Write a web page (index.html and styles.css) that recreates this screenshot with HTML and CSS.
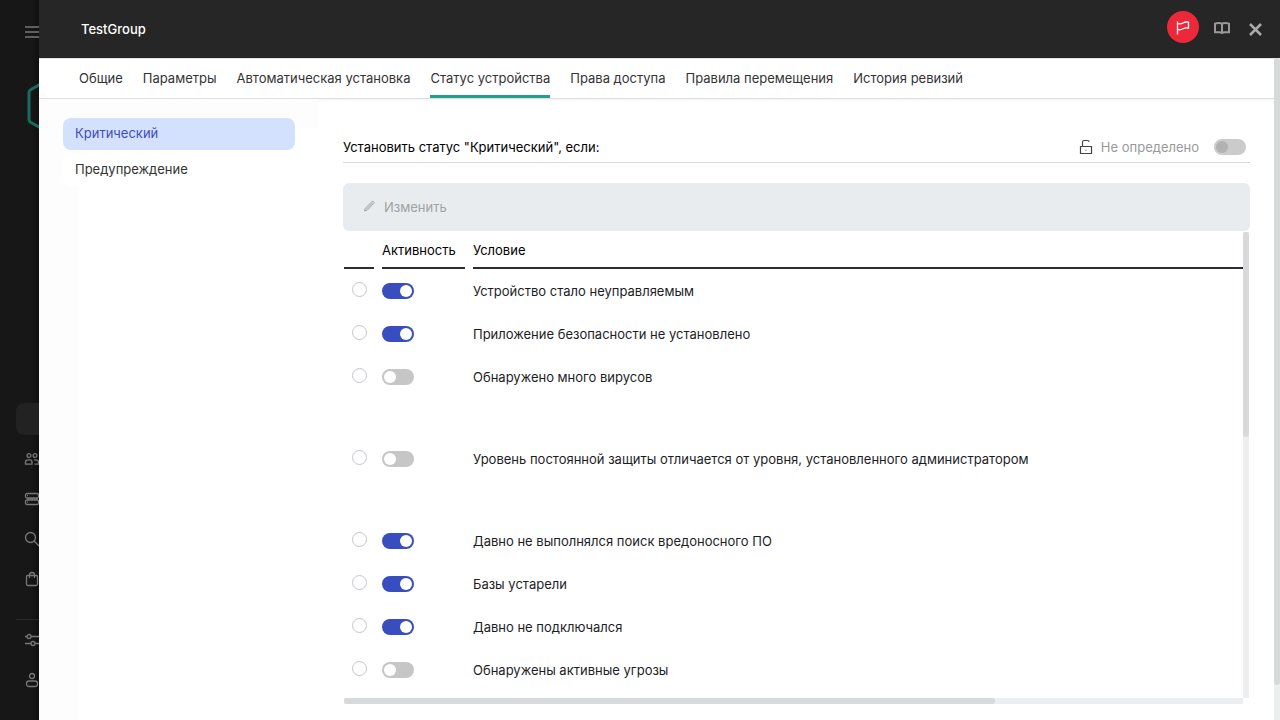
FILE: index.html
```html
<!DOCTYPE html>
<html lang="ru">
<head>
<meta charset="utf-8">
<title>TestGroup</title>
<link rel="stylesheet" href="styles.css">
</head>
<body>
<div class="app">
  <nav class="rail" aria-label="Главное меню">
    <button class="rail-menu" aria-label="Меню"><svg width="16" height="16" viewBox="0 0 16 16"><path d="M0 3h16M0 8h16M0 13h16"/></svg></button>
    <svg class="rail-logo" width="40" height="48" viewBox="0 0 40 48"><path d="M20 -1 5 7.500Q3 8.500 3 11v26q0 2.500 2 3.500l15 8.500 15-8.500q2-1 2-3.500V11q0-2.500-2-3.500z"/></svg>
    <div class="rail-list">
      <a class="rail-item active" href="#" aria-label="Активы"></a>
      <a class="rail-item" href="#" aria-label="Пользователи"><svg width="16" height="16" viewBox="0 0 16 16"><circle cx="5" cy="4.500" r="1.900"/><circle cx="11" cy="4.500" r="1.900"/><path d="M4 8.800h2Q8 8.800 8 11v2.200H1.500V11q0-2.200 2.500-2.200zM10 8.800h2q2.500 0 2.500 2.200v2.200h-4"/></svg></a>
      <a class="rail-item" href="#" aria-label="Операции"><svg width="16" height="16" viewBox="0 0 16 16"><rect x="1.500" y="2.500" width="13" height="4.500" rx="1.500"/><rect x="1.500" y="9" width="13" height="4.500" rx="1.500"/><path d="M3 4.700h1M3 11.200h1M3 8h11"/></svg></a>
      <a class="rail-item" href="#" aria-label="Поиск"><svg width="16" height="16" viewBox="0 0 16 16"><circle cx="6.500" cy="6.500" r="5"/><path d="m10 10 5 5"/></svg></a>
      <a class="rail-item" href="#" aria-label="Магазин"><svg width="16" height="16" viewBox="0 0 16 16"><path d="M3.500 4.500h9q1 0 1 1v7.500q0 1.500-1.500 1.500H4q-1.500 0-1.500-1.500v-7.500q0-1 1-1zM5.500 7V4q0-2.500 2.500-2.500T10.500 4v3"/></svg></a>
    </div>
    <div class="rail-list rail-foot">
      <a class="rail-item" href="#" aria-label="Параметры"><svg width="16" height="16" viewBox="0 0 16 16"><path d="M1 4.500h2M7 4.500h9M1 11.500h6M11 11.500h5"/><circle cx="5" cy="4.500" r="2"/><circle cx="9" cy="11.500" r="2"/></svg></a>
      <a class="rail-item" href="#" aria-label="Учетная запись"><svg width="16" height="16" viewBox="0 0 16 16"><circle cx="8" cy="4" r="2.500"/><rect x="2.500" y="9" width="11" height="5.500" rx="2.500"/></svg></a>
    </div>
  </nav>

  <main class="panel">
    <header class="panel-head">
      <h1>TestGroup</h1>
      <div class="head-actions">
        <button class="flag" aria-label="Сообщения"><svg width="16" height="16" viewBox="0 0 16 16"><path d="M2.500 2.500v13M2.500 4.500c2 .6 4 .4 5.500-.5 1.700-1 3.500-1.200 5.500-.8V9c-2-.4-3.800-.2-5.500.8-1.500.9-3.500 1.200-5.500.6"/></svg></button>
        <button class="book" aria-label="Справка"><svg width="16" height="14" viewBox="0 0 16 14"><path d="M8 3Q7 2 5 2 2.500 2 1 2.600v8.700h4.500Q7.200 11.300 8 12q.8-.7 2.500-.7H15V2.600Q13.500 2 11 2 9 2 8 3zv9"/></svg></button>
        <button class="close" aria-label="Закрыть"><svg width="13" height="13" viewBox="0 0 13 13"><path d="m1 1 11 11M12 1 1 12"/></svg></button>
      </div>
    </header>

    <div class="panel-scroll">
      <div class="panel-body">
        <nav class="tabs">
          <a href="#">Общие</a>
          <a href="#">Параметры</a>
          <a href="#">Автоматическая установка</a>
          <a href="#" class="current" aria-current="page">Статус устройства</a>
          <a href="#">Права доступа</a>
          <a href="#">Правила перемещения</a>
          <a href="#">История ревизий</a>
        </nav>

        <div class="columns">
          <nav class="side">
            <a href="#" class="current" aria-current="page">Критический</a>
            <a href="#">Предупреждение</a>
          </nav>

          <section class="content">
            <div class="section-head">
              <h2>Установить статус "Критический", если:</h2>
              <div class="lock">
                <svg width="14" height="16" viewBox="0 0 14 16"><path d="M1.500 7.500h11v7h-11zM3.500 7.500V3q0-1.500 1.500-1.500h3.500Q10 1.500 10 3"/><path class="dot" d="M6 10.500h2v1.500H6z"/></svg>
                <label for="enforce">Не определено</label>
                <input class="toggle" id="enforce" type="checkbox" disabled>
              </div>
            </div>

            <div class="toolbar">
              <button disabled><svg width="13" height="14" viewBox="0 0 13 14"><path d="m1.500 11 .8-2.800L9 1.600q.8-.7 1.700.1t.1 1.700L4.200 10.200zM3.200 9.300l6.500-6.500"/></svg>Изменить</button>
            </div>

            <div class="table-area">
              <div class="table-view">
                <table>
                  <thead>
                    <tr><th class="pick"><span></span></th><th class="state"><span>Активность</span></th><th><span>Условие</span></th></tr>
                  </thead>
                  <tbody>
                    <tr><td><input type="radio" name="row" aria-labelledby="c1"></td><td><input class="toggle" type="checkbox" aria-labelledby="c1" checked></td><td id="c1">Устройство стало неуправляемым</td></tr>
                    <tr><td><input type="radio" name="row" aria-labelledby="c2"></td><td><input class="toggle" type="checkbox" aria-labelledby="c2" checked></td><td id="c2">Приложение безопасности не установлено</td></tr>
                    <tr class="tall"><td><input type="radio" name="row" aria-labelledby="c3"></td><td><input class="toggle" type="checkbox" aria-labelledby="c3"></td><td id="c3">Обнаружено много вирусов</td></tr>
                    <tr class="tall"><td><input type="radio" name="row" aria-labelledby="c4"></td><td><input class="toggle" type="checkbox" aria-labelledby="c4"></td><td id="c4">Уровень постоянной защиты отличается от уровня, установленного администратором</td></tr>
                    <tr><td><input type="radio" name="row" aria-labelledby="c5"></td><td><input class="toggle" type="checkbox" aria-labelledby="c5" checked></td><td id="c5">Давно не выполнялся поиск вредоносного ПО</td></tr>
                    <tr><td><input type="radio" name="row" aria-labelledby="c6"></td><td><input class="toggle" type="checkbox" aria-labelledby="c6" checked></td><td id="c6">Базы устарели</td></tr>
                    <tr><td><input type="radio" name="row" aria-labelledby="c7"></td><td><input class="toggle" type="checkbox" aria-labelledby="c7" checked></td><td id="c7">Давно не подключался</td></tr>
                    <tr><td><input type="radio" name="row" aria-labelledby="c8"></td><td><input class="toggle" type="checkbox" aria-labelledby="c8"></td><td id="c8">Обнаружены активные угрозы</td></tr>
                  </tbody>
                </table>
              </div>
              <div class="bar bar-y table-bar-y"><div class="thumb"></div></div>
              <div class="bar bar-x"><div class="thumb"></div></div>
            </div>
          </section>
        </div>
      </div>
      <div class="bar bar-y page-bar"><div class="thumb"></div></div>
    </div>
  </main>
</div>
</body>
</html>
```
FILE: styles.css
```css
* { box-sizing: border-box; }

body {
  margin: 0;
  font-family: Inter, "Liberation Sans", sans-serif;
  font-size: 13px;
  line-height: 20px;
  color: #1d1d1f;
  background: #171717;
}

a { color: inherit; text-decoration: none; }
h1, h2 { margin: 0; font-size: 13px; font-weight: 400; }
button { padding: 0; border: 0; background: none; font: inherit; color: inherit; }
svg { display: block; flex: none; fill: none; stroke: currentColor; }

.app {
  display: grid;
  grid-template-columns: 39px minmax(0, 1fr);
  height: 100vh;
  overflow: hidden;
}

/* Left rail */
.rail {
  display: flex;
  flex-direction: column;
  padding-bottom: 24px;
  overflow: hidden;
  color: #777;
  background: linear-gradient(90deg, #171717 80%, #101010);
}
.rail-menu { display: flex; align-items: center; height: 64px; padding-left: 25px; stroke-width: 2; color: #5e5e5e; }
.rail-logo { margin: 18px 0 0 26px; color: #176b5f; stroke-width: 3; }
.rail-list { display: flex; flex-direction: column; gap: 8px; margin: auto 0 24px 16px; }
.rail-foot { margin: 0 0 0 16px; padding-top: 4px; border-top: 1px solid #292929; }
.rail-item { display: flex; align-items: center; width: 40px; height: 32px; padding-left: 8px; border-radius: 8px; stroke-width: 1.3; }
.rail-item.active { background: #222; }

/* Panel */
.panel { display: flex; flex-direction: column; min-height: 0; background: #fff; }
.panel-head {
  display: flex;
  align-items: center;
  justify-content: space-between;
  flex: none;
  height: 58px;
  padding: 0 18px 0 42px;
  color: #fff;
  background: #262626;
}
.panel-head h1 { font-weight: 500; }
.head-actions { display: flex; align-items: center; color: #999; }
.flag {
  display: grid;
  place-items: center;
  width: 32px;
  height: 32px;
  margin: 0 15px 4px 0;
  border-radius: 50%;
  color: #fff;
  background: #ed2939;
  stroke-width: 1.3;
}
.book { margin: 0 19px 2px 0; stroke-width: 2; }
.close { stroke-width: 2.5; color: #aaa; }

.panel-scroll { display: flex; flex: 1; min-height: 0; }
.panel-body { display: flex; flex-direction: column; flex: 1; min-width: 0; }

.tabs {
  display: flex;
  flex: none;
  gap: 20px;
  height: 41px;
  padding-left: 40px;
  border-top: 1px solid #e3e3e3;
  border-bottom: 1px solid #dedede;
  box-shadow: 0 1px 2px #0000000f;
  color: #333;
}
.tabs a { padding-top: 9px; border-bottom: 3px solid transparent; white-space: nowrap; }
.tabs .current { border-color: #23a08a; }

.columns {
  display: flex;
  flex: 1;
  min-height: 0;
  padding: 19px 24px 16px;
  background:
    linear-gradient(#fdfdfd, #fdfdfd) 0 0 / 280px 29px no-repeat,
    linear-gradient(#fdfdfd, #fdfdfd) 0 0 / 40px 100% no-repeat;
}
.side { display: flex; flex-direction: column; flex: none; gap: 4px; width: 232px; }
.side a { padding: 5px 12px 7px; border-radius: 8px; background: #fff; color: #333; }
.side .current { color: #3f4cb8; background: #d3e1ff; }

.content { display: flex; flex-direction: column; flex: 1; min-width: 0; margin-left: 48px; }
.section-head {
  display: flex;
  align-items: center;
  justify-content: space-between;
  flex: none;
  height: 45px;
  padding: 14px 4px 0 0;
  border-bottom: 1px solid #d9d9d9;
  color: #000;
}
.lock { display: flex; align-items: center; color: #444; stroke-width: 1.2; }
.lock label { margin: 0 15px 0 8px; color: #999; }
.lock .dot { stroke: none; fill: #bbb; }

.toolbar {
  display: flex;
  flex: none;
  height: 48px;
  margin-top: 20px;
  padding-left: 20px;
  border-radius: 6px;
  background: #e8ecef;
}
.toolbar button { display: flex; align-items: center; gap: 8px; color: #a0a2a4; }

.table-area {
  display: grid;
  grid-template-columns: minmax(0, 1fr) 6px;
  grid-template-rows: minmax(0, 1fr) 6px;
  flex: 1;
  min-height: 0;
  padding: 0 1px;
}
.table-view { overflow: hidden; }
table { width: 100%; border-collapse: collapse; table-layout: fixed; }
th, td { padding: 0 8px 0 0; text-align: left; vertical-align: top; }
th { font-weight: 400; color: #000; }
th:last-child, td:last-child { padding-right: 0; }
th span { display: block; height: 38px; padding-top: 9px; border-bottom: 2px solid #2d2a30; }
.pick { width: 38px; }
.state { width: 91px; }
td { height: 43px; padding-top: 12px; }
.tall td { height: 82px; }

input { display: block; margin: 0; appearance: none; }
input[type="radio"] { width: 15px; height: 15px; margin: 1px 0 0 8px; border: 1px solid #c4c6cc; border-radius: 50%; background: #fff; }
input[type="radio"]:checked { border: 5px solid #384dbf; }
.toggle { display: flex; width: 32px; height: 16px; padding: 2px; border-radius: 8px; background: #c6c6c6; }
td .toggle { margin-top: 2px; }
.toggle::before { content: ""; width: 12px; height: 12px; border-radius: 50%; background: #fff; }
.toggle:checked { justify-content: flex-end; background: #384dbf; }
.toggle:disabled { background: #cbcbcb; }
.toggle:disabled::before { background: #b2b2b2; }

/* Scroll bars */
.bar { background: #edeef0; }
.thumb { border-radius: 3px; background: #d8d9db; }
.bar-y { width: 6px; }
.table-bar-y { margin-top: 1px; }
.table-bar-y .thumb { height: 44%; }
.bar-x .thumb { width: 72.4%; height: 6px; }
.page-bar { flex: none; }
.page-bar .thumb { height: 94.7%; }
```
